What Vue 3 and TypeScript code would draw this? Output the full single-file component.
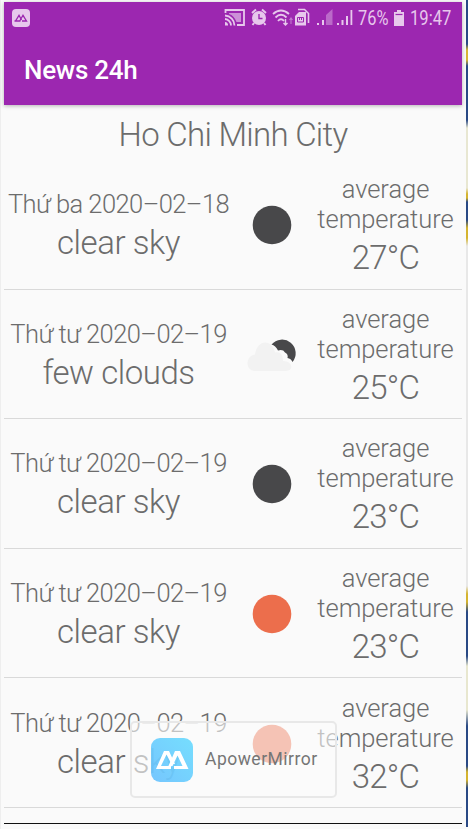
<script setup lang="ts">
interface Forecast {
  day: string
  sky: string
  icon: 'night' | 'cloud' | 'sun'
  temp: number
}

const forecasts: Forecast[] = [
  { day: 'Thứ ba 2020–02–18', sky: 'clear sky', icon: 'night', temp: 27 },
  { day: 'Thứ tư 2020–02–19', sky: 'few clouds', icon: 'cloud', temp: 25 },
  { day: 'Thứ tư 2020–02–19', sky: 'clear sky', icon: 'night', temp: 23 },
  { day: 'Thứ tư 2020–02–19', sky: 'clear sky', icon: 'sun', temp: 23 },
  { day: 'Thứ tư 2020–02–19', sky: 'clear sky', icon: 'sun', temp: 32 },
]
</script>

<template>
  <div class="window">
    <div class="phone">
      <header class="appbar">
        <div class="status">
          <svg class="mirror" viewBox="0 0 18 18">
            <rect width="18" height="18" rx="4" fill="#e7c8ec" />
            <path d="M2.500 12H8.500M3.500 12 7 6.300 9.500 11M8 11.500 11 6.300 14.500 12H10" fill="none" stroke="#9c27b0" stroke-width="1.300" />
          </svg>
          <svg class="icons" viewBox="0 0 134 20" fill="#e7c8ec">
            <g fill="none" stroke="#e7c8ec" stroke-width="1.8">
              <path d="M1.500 5V2H20V17H13" />
              <path d="M1 7.500A10 10 0 0 1 10.500 17.500M1 11A6.500 6.500 0 0 1 7 17.500" />
            </g>
            <path d="M5 5H17V14H12.500Q10 7.500 5 6Z" opacity=".65" />
            <path d="M1 14A3 3 0 0 1 4 17.500H1Z" />
            <circle cx="35" cy="10" r="7" />
            <path d="M28 5 32 1.500M42 5 38 1.500M30 15 28.500 17M40 15 41.500 17" stroke="#e7c8ec" stroke-width="2" />
            <path d="M35 6V10.500H38.500" fill="none" stroke="#9c27b0" stroke-width="1.400" />
            <g fill="none" stroke="#e7c8ec" stroke-width="1.800">
              <path d="M49 6Q57 -1 65 6M51.500 9.500Q57 4 62.500 9.500M54 13Q57 9.500 60 13" />
              <path d="M61.500 11V17M59.500 15 61.500 17 63.500 15" stroke-width="1.400" />
              <path d="M67 16V10M65.500 12 67 10 68.500 12" stroke-width="1.100" opacity=".5" />
            </g>
            <path d="M71 8 75 4H82V17.500H71Z" />
            <path d="M74 1.500H80.500L84.500 5.500V15" fill="none" stroke="#e7c8ec" stroke-width="1.600" />
            <path d="M73.500 9.500H79.500V14H73.500ZM75.500 9.500V12M77.500 9.500V12" fill="none" stroke="#9c27b0" stroke-width="1" />
            <path d="M93 15h2v2h-2zM98 12h2v5h-2z" /><path d="M102 7 108.500 1V17H102Z" opacity=".42" />
            <path d="M113 15h2v2h-2zM117.500 12h2v5h-2zM122 8h2v9h-2zM126.500 2h1.800v15h-1.800z" />
          </svg>
          <span class="percent">76%</span>
          <svg class="battery" viewBox="0 0 10 16">
            <path d="M3 0H7V2H10V16H0V2H3Z" fill="#e7c8ec" /><path d="M1.500 4.500H8.500" stroke="#9c27b0" stroke-width="1.200" />
          </svg>
          <span class="clock">19:47</span>
        </div>
        <h1>News 24h</h1>
      </header>

      <h2>Ho Chi Minh City</h2>

      <ul>
        <li v-for="(f, i) in forecasts" :key="i">
          <div class="info">
            <p class="date">{{ f.day }}</p>
            <p class="sky">{{ f.sky }}</p>
          </div>
          <svg class="weather" viewBox="0 0 60 60">
            <template v-if="f.icon === 'cloud'">
              <path d="M29.500 19.500A13 13 0 1 1 50.500 37Q49 33.500 45.500 33Q46.500 29 43 27.500Q41 24 36 25.500Q33.500 20.500 29.500 19.500Z" fill="#48484a" />
              <path d="M13 46C3 46 3 31 13 29.500C15 15 29 13 33 27.500C39 26 41 31 41 36C51 36 52 46 44 46Z" fill="#f2f2f2" />
            </template>
            <circle v-else cx="30" cy="30" r="19.300" :fill="f.icon === 'sun' ? '#ec6e4c' : '#48484a'" />
          </svg>
          <div class="average">
            <p class="label">average<br>temperature</p>
            <p class="temp">{{ f.temp }}°C</p>
          </div>
        </li>
      </ul>

      <div class="toast">
        <svg viewBox="0 0 42 44">
          <defs>
            <linearGradient id="tile" x1="1" y1="0" x2="0" y2="1">
              <stop offset="0" stop-color="#5cd8ff" /><stop offset="1" stop-color="#5cbcff" />
            </linearGradient>
          </defs>
          <rect width="42" height="44" rx="9" fill="url(#tile)" opacity=".84" />
          <path d="M5 31 13 13H18L24 26H20.500L15.500 16.500 10 28H20V31Z" fill="#fff" />
          <path d="M17 29 24 13H29L37.500 31H23V28H31.500L26.500 17.500 21.500 28Z" fill="#fff" />
        </svg>
        <span>ApowerMirror</span>
      </div>
    </div>
    <div class="edge"></div>
  </div>
</template>

<style>
body {
  background: #f5f5f5;
}
</style>

<style scoped>
* {
  box-sizing: border-box;
  margin: 0;
  padding: 0;
}
.window {
  display: flex;
  width: 468px;
  height: 829px;
  padding: 2px 0 0 4px;
  overflow: hidden;
  background: #fafafa;
  box-shadow: inset 1px 0 #eee;
  font-family: Roboto, sans-serif;
  color: #6c6c6c;
}
.phone {
  position: relative;
  width: 458px;
  height: 822px;
  background: #fafafa;
  border-bottom: 1px solid #111;
}
.edge {
  width: 2px;
  height: 827px;
  margin: -2px 0 0 4px;
  background: linear-gradient(#294985 0 44px, #d8b536 50px 60px, #294985 66px 120px, #e8e7d2 128px 188px, #d5b42f 194px 198px, #294985 202px 220px, #d5b42f 228px 238px, #e8e8e8 246px 586px, #d5b42f 594px 602px, #294985 612px 656px, #e8e7cf 666px 710px, #294985 726px 766px, #d5b42f 772px 780px, #294985 788px);
}
.appbar {
  height: 103px;
  background: #9c27b0;
  box-shadow: 0 1px 4px rgba(0, 0, 0, .28);
  color: #fff;
}
.status {
  display: flex;
  align-items: center;
  height: 32px;
  padding: 0 11px 0 8px;
  color: #e7c8ec;
}
.mirror {
  width: 18px;
  height: 18px;
}
.icons {
  width: 134px;
  height: 20px;
  margin-left: 194px;
}
.percent {
  width: 32px;
  font-size: 19.500px;
  transform: scaleX(.84);
  transform-origin: left;
}
.battery {
  width: 10px;
  height: 16px;
  margin-left: 4px;
}
.clock {
  width: 41px;
  margin-left: 6px;
  font-size: 20.500px;
  transform: scaleX(.81);
  transform-origin: left;
}
h1 {
  padding: 21px 0 0 20px;
  font-size: 26px;
  font-weight: 500;
  line-height: 31px;
  letter-spacing: -.250px;
}
h2 {
  height: 55px;
  padding-top: 10px;
  font-size: 33px;
  font-weight: 300;
  line-height: 39px;
  letter-spacing: -.720px;
  text-align: center;
}
ul {
  list-style: none;
}
li {
  display: grid;
  grid-template-columns: 229px 78px 151px;
  align-items: center;
  height: 129.600px;
  padding-top: 3px;
  border-bottom: 1px solid #d9d9d9;
  text-align: center;
  font-weight: 300;
  white-space: nowrap;
}
.date,
.label {
  font-size: 25.500px;
  line-height: 30px;
}
.date {
  letter-spacing: -.570px;
}
.label {
  letter-spacing: -.050px;
}
.sky,
.temp {
  font-size: 33px;
  line-height: 39px;
  letter-spacing: -.450px;
}
.sky {
  padding-top: 4px;
}
.average {
  padding-right: 2px;
}
.temp {
  padding-top: 4px;
  letter-spacing: -.700px;
}
.weather {
  width: 60px;
  height: 60px;
  margin: 0 0 1px 9px;
}
.toast {
  position: absolute;
  top: 719px;
  left: 126px;
  display: flex;
  align-items: center;
  gap: 12px;
  width: 207px;
  height: 77px;
  padding-left: 19px;
  background: rgba(252, 252, 252, .6);
  border: 2px solid #e8e8e8;
  border-radius: 5px;
  color: #757575;
  font-size: 17.500px;
  letter-spacing: .500px;
}
.toast span {
  padding-bottom: 2px;
}
.toast svg {
  width: 42px;
  height: 44px;
}
</style>
